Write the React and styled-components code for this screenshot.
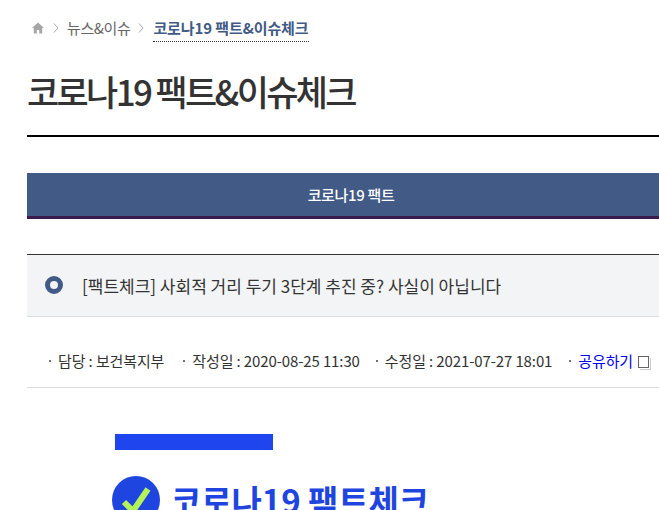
import styled, { createGlobalStyle } from 'styled-components';

const GlobalStyle = createGlobalStyle`
  html, body {
    margin: 0;
    padding: 0;
    background: #fff;
    overflow: hidden;
  }
  body {
    font-family: "Noto Sans CJK KR", "Noto Sans", sans-serif;
    color: #333;
  }
`;

const Page = styled.div`
  width: 659px;
  height: 510px;
  overflow: hidden;
  padding-left: 27px;
  box-sizing: border-box;
`;

const Breadcrumb = styled.nav`
  display: flex;
  align-items: center;
  height: 44px;
  padding: 12px 0 0 5px;
  box-sizing: border-box;
  font-size: 15px;
  color: #666;
`;

const Crumb = styled.span`
  line-height: 20px;
  letter-spacing: -0.4px;
`;

const CurrentCrumb = styled.span`
  line-height: 20px;
  font-weight: 700;
  letter-spacing: -0.1px;
  color: #415a86;
  border-bottom: 1px dotted #333;
  padding-bottom: 3px;
  margin-top: 3px;
`;

const Sep = styled.svg`
  width: 6px;
  height: 10px;
  margin: 0 ${(p) => p.$right}px 0 ${(p) => p.$left}px;
  fill: none;
  stroke: #aaa;
  stroke-width: 1;
`;

const Title = styled.h2`
  margin: 0;
  height: 93px;
  padding-top: 24px;
  box-sizing: border-box;
  font-size: 35px;
  line-height: 46px;
  font-weight: 500;
  letter-spacing: -2.65px;
  color: #333;
  border-bottom: 2px solid #000;
  width: 700px;
`;

const TabBar = styled.div`
  margin-top: 36px;
  width: 648px;
  height: 46px;
  box-sizing: border-box;
  display: flex;
  align-items: center;
  justify-content: center;
  background: #415a86;
  border-bottom: 3px solid #3c1a4e;
  color: #fff;
  font-size: 15px;
  font-weight: 500;
  letter-spacing: -0.35px;
`;

const Notice = styled.div`
  margin-top: 35px;
  height: 63px;
  padding-bottom: 1px;
  box-sizing: border-box;
  display: flex;
  align-items: center;
  gap: 19px;
  padding-left: 18px;
  background: #f2f4f6;
  border-top: 1px solid #333;
  border-bottom: 1px solid #ddd;
  font-size: 17px;
  color: #333;
  width: 640px;
`;

const Ring = styled.span`
  width: 18px;
  height: 18px;
  box-sizing: border-box;
  border: 5px solid #415a86;
  border-radius: 50%;
  flex: none;
`;

const Meta = styled.ul`
  list-style: none;
  margin: 0;
  padding: 34px 0 0 31px;
  height: 71px;
  width: 640px;
  box-sizing: border-box;
  display: flex;
  align-items: flex-start;
  border-bottom: 1px solid #ddd;
  font-size: 15px;
  letter-spacing: -0.12px;
  color: #333;
  white-space: nowrap;
`;

const MetaItem = styled.li`
  position: relative;
  margin-right: ${(p) => p.$gap}px;
  line-height: 20px;

  &::before {
    content: '';
    position: absolute;
    left: -9px;
    top: 9px;
    width: 2px;
    height: 2px;
    border-radius: 50%;
    background: #444;
  }
`;

const ShareLink = styled.a`
  color: #0000ee;
`;

const ShareBox = styled.span`
  display: inline-block;
  width: 9px;
  height: 10px;
  margin-left: 5px;
  border: 1px solid #666;
  box-shadow: 1px 1px 0 #fff, 2px 2px 0 #ccc;
  vertical-align: -1px;
`;

const Poster = styled.div`
  padding: 46px 0 0 85px;
`;

const PosterBar = styled.div`
  width: 158px;
  height: 16px;
  margin-left: 3px;
  background: #1f45ee;
`;

const PosterHead = styled.div`
  margin-top: 26px;
  display: flex;
  align-items: flex-start;
  gap: 11px;
  color: #1f45e0;
  font-size: 33px;
  font-weight: 700;
  line-height: 48px;
  letter-spacing: -0.1px;
  white-space: nowrap;
`;

const Badge = styled.svg`
  width: 48px;
  height: 48px;
  flex: none;
`;

export default function App() {
  return (
    <Page>
      <GlobalStyle />
      <Breadcrumb>
        <svg width="12" height="12" viewBox="0 0 12 12" fill="#a6a6a6">
          <path d="M6 0.5 0 6h1.8v5.5h3V8h2.4v3.5h3V6H12z" />
        </svg>
        <Sep $left={9} $right={8} viewBox="0 0 6 10">
          <path d="M1 0.5 5 5 1 9.5" />
        </Sep>
        <Crumb>뉴스&이슈</Crumb>
        <Sep $left={8} $right={9} viewBox="0 0 6 10">
          <path d="M1 0.5 5 5 1 9.5" />
        </Sep>
        <CurrentCrumb>코로나19 팩트&이슈체크</CurrentCrumb>
      </Breadcrumb>
      <Title>코로나19 팩트&이슈체크</Title>
      <TabBar>코로나19 팩트</TabBar>
      <Notice>
        <Ring />
        [팩트체크] 사회적 거리 두기 3단계 추진 중? 사실이 아닙니다
      </Notice>
      <Meta>
        <MetaItem $gap={28}>담당 : 보건복지부</MetaItem>
        <MetaItem $gap={25}>작성일 : 2020-08-25 11:30</MetaItem>
        <MetaItem $gap={26}>수정일 : 2021-07-27 18:01</MetaItem>
        <MetaItem $gap={0}>
          <ShareLink>공유하기</ShareLink>
          <ShareBox />
        </MetaItem>
      </Meta>
      <Poster>
        <PosterBar />
        <PosterHead>
          <Badge viewBox="0 0 48 48">
            <circle cx="24" cy="24" r="24" fill="#1f45e0" />
            <path d="M12 26l9 9L36 13" fill="none" stroke="#b4f25a" strokeWidth="6" />
          </Badge>
          코로나19 팩트체크
        </PosterHead>
      </Poster>
    </Page>
  );
}
